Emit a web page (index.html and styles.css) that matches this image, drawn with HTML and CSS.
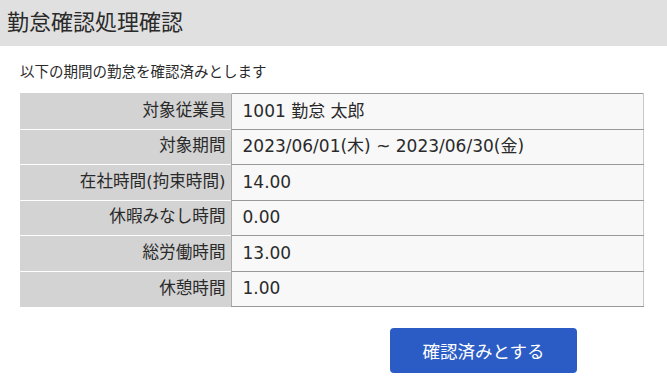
FILE: index.html
```html
<!DOCTYPE html>
<html lang="ja">
<head>
<meta charset="utf-8">
<title>勤怠確認処理確認</title>
<link rel="stylesheet" href="styles.css">
</head>
<body>
<header class="page-header">
  <h1 class="page-title">勤怠確認処理確認</h1>
</header>
<main class="content">
  <p class="lead">以下の期間の勤怠を確認済みとします</p>
  <table class="info-table">
    <tbody>
      <tr><th>対象従業員</th><td>1001 勤怠 太郎</td></tr>
      <tr><th>対象期間</th><td>2023/06/01(木) ~ 2023/06/30(金)</td></tr>
      <tr><th>在社時間(拘束時間)</th><td>14.00</td></tr>
      <tr><th>休暇みなし時間</th><td>0.00</td></tr>
      <tr><th>総労働時間</th><td>13.00</td></tr>
      <tr><th>休憩時間</th><td>1.00</td></tr>
    </tbody>
  </table>
  <div class="actions">
    <button class="btn-primary" type="button">確認済みとする</button>
  </div>
</main>
</body>
</html>
```

FILE: styles.css
```css
html, body {
  margin: 0;
  padding: 0;
  background: #ffffff;
  color: #222222;
  font-family: "DejaVu Sans", "Noto Sans CJK JP", sans-serif;
}

.page-header {
  background: #e0e0e0;
  height: 46px;
  display: flex;
  align-items: center;
  padding-left: 7px;
}

.page-title {
  margin: 0;
  font-size: 22px;
  font-weight: 400;
  line-height: 1;
  color: #2a2a2a;
}

.content {
  padding: 0 23px 0 20px;
}

.lead {
  margin: 16px 0 0 0;
  font-size: 14.5px;
  line-height: 20px;
  height: 31px;
  color: #2a2a2a;
}

.info-table {
  width: 624px;
  border-collapse: collapse;
  font-size: 17px;
}

.info-table th,
.info-table td {
  height: 34.5px;
  padding: 0;
  font-weight: 400;
  line-height: 1;
  color: #2a2a2a;
}

.info-table th {
  box-sizing: border-box;
  width: 211px;
  background: #d3d3d3;
  text-align: right;
  padding-right: 5px;
  border-top: 1px solid #ffffff;
  font-size: 16.6px;
}

.info-table tr:first-child th {
  border-top: 1px solid #d3d3d3;
}

.info-table td {
  background: #f8f8f8;
  padding-left: 11px;
  border-top: 1px solid #999999;
  border-bottom: 1px solid #999999;
  border-left: 1px solid #aaaaaa;
  border-right: 1px solid #c8c8c8;
}

.actions {
  padding-left: 370px;
  margin-top: 21px;
}

.btn-primary {
  width: 187px;
  height: 45px;
  background: #2b5cc6;
  color: #ffffff;
  border: none;
  border-radius: 4px;
  font-family: inherit;
  font-size: 17.5px;
  padding: 0;
  cursor: pointer;
}
```
